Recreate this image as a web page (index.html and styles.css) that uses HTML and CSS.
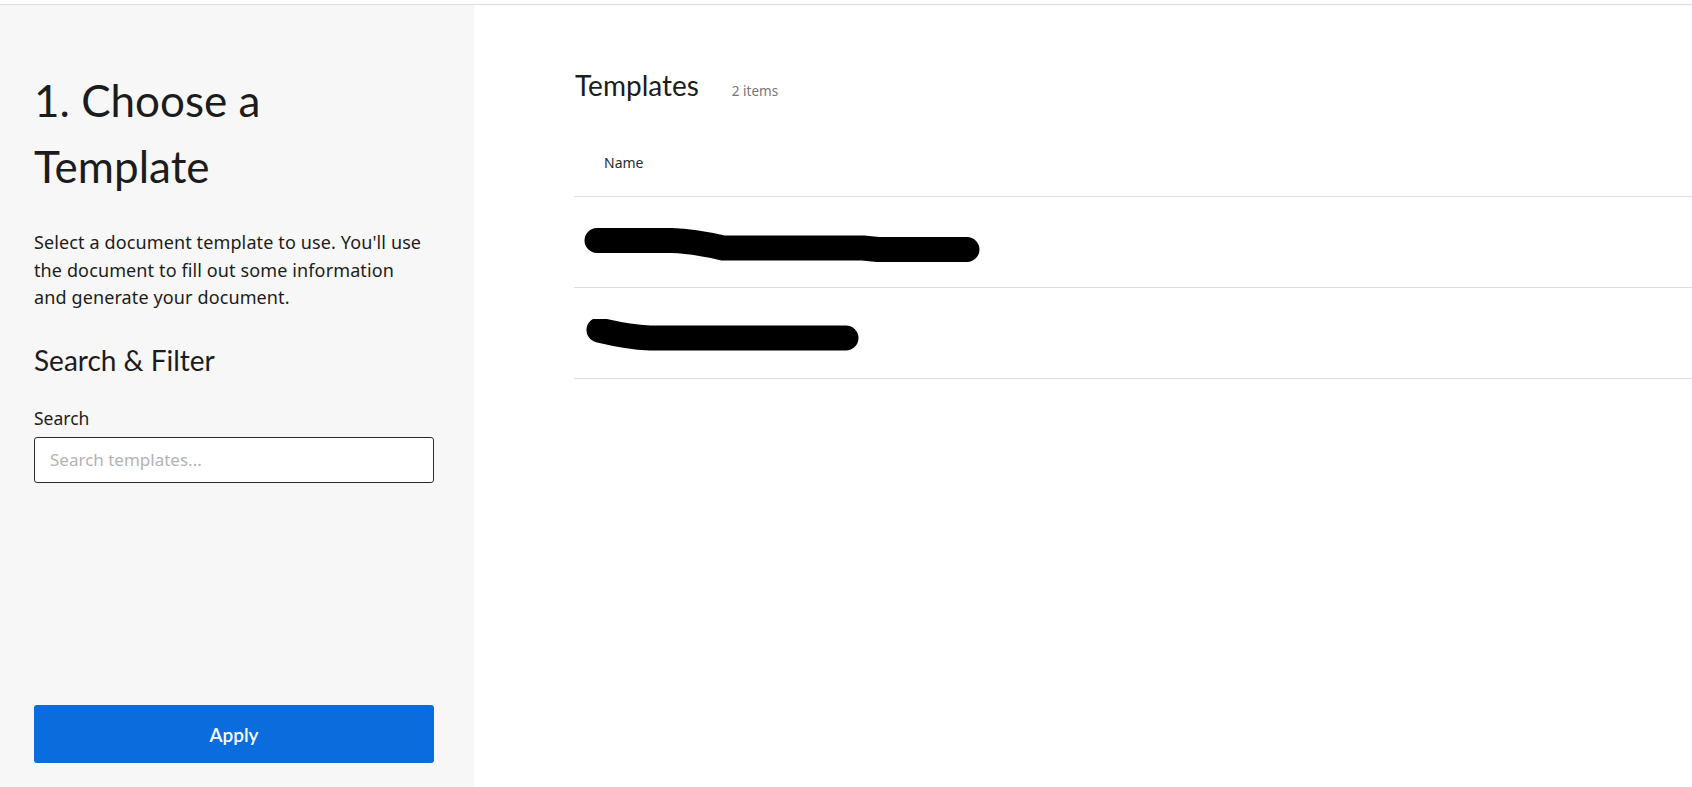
FILE: index.html
```html
<!DOCTYPE html>
<html lang="en">
<head>
<meta charset="utf-8">
<title>Choose a Template</title>
<link rel="stylesheet" href="styles.css">
</head>
<body>
<div class="topbar"></div>
<div class="layout">
  <aside class="sidebar">
    <h1 class="title">1. Choose a Template</h1>
    <p class="intro">Select a document template to use. You'll use the document to fill out some information<br>and generate your document.</p>
    <h2 class="subtitle">Search &amp; Filter</h2>
    <label class="label" for="q">Search</label>
    <input class="search" id="q" type="text" placeholder="Search templates...">
    <button class="apply" type="button">Apply</button>
  </aside>
  <main class="content">
    <div class="content-head">
      <h2 class="content-title">Templates</h2>
      <span class="count">2 items</span>
    </div>
    <div class="table">
      <div class="th">Name</div>
      <div class="row">
        <svg class="redact" width="420" height="40" viewBox="0 0 420 40">
          <path d="M24 12.5 L99 12.5 Q120 13 150 20 L290 20 L305 21.5 L394 21.5" fill="none" stroke="#000" stroke-width="25" stroke-linecap="round" stroke-linejoin="round"/>
        </svg>
      </div>
      <div class="row">
        <svg class="redact" width="420" height="40" viewBox="0 0 420 40">
          <path d="M26 11 Q55 18 77 19 L273 19" fill="none" stroke="#000" stroke-width="25" stroke-linecap="round" stroke-linejoin="round"/>
        </svg>
      </div>
    </div>
  </main>
</div>
</body>
</html>
```
FILE: styles.css
```css
* { box-sizing: border-box; }
html, body { margin: 0; padding: 0; }
body {
  font-family: "Noto Sans", "Liberation Sans", sans-serif;
  color: #1c1c1c;
  background: #fff;
  overflow: hidden;
}
.topbar {
  height: 5px;
  border-bottom: 1px solid #dcdcdc;
}
.layout {
  display: flex;
  height: 782px;
}
.sidebar {
  width: 474px;
  flex: none;
  background: #f7f7f7;
  padding: 0 40px 24px 34px;
  display: flex;
  flex-direction: column;
}
.title {
  margin: 62px 0 0;
  font-family: Lato, "Noto Sans", sans-serif;
  font-size: 44px;
  font-weight: 400;
  line-height: 66px;
}
.intro {
  margin: 30px 0 0;
  font-size: 18px;
  line-height: 27.5px;
  letter-spacing: 0.12px;
}
.subtitle {
  margin: 30px 0 0;
  font-family: Lato, "Noto Sans", sans-serif;
  font-size: 28px;
  font-weight: 400;
  line-height: 36px;
}
.label {
  margin-top: 29px;
  font-size: 17.5px;
  line-height: 22px;
}
.search {
  margin-top: 8px;
  height: 46px;
  width: 100%;
  border: 1px solid #2b2b2b;
  border-radius: 3px;
  background: #fff;
  padding: 0 15px;
  font-family: inherit;
  font-size: 17px;
  color: #1c1c1c;
}
.search::placeholder { color: #b3b3b3; }
.apply {
  margin-top: auto;
  height: 58px;
  width: 100%;
  border: 0;
  border-radius: 3px;
  background: #0b6cde;
  color: #fff;
  font-family: Lato, "Noto Sans", sans-serif;
  font-size: 19px;
  font-weight: 600;
}
.content {
  flex: 1;
  padding-left: 100px;
}
.content-head {
  display: flex;
  align-items: baseline;
  gap: 33px;
  margin-top: 62px;
}
.content-title {
  margin: 0;
  font-family: Lato, "Noto Sans", sans-serif;
  font-size: 28px;
  font-weight: 400;
  line-height: 36px;
  padding-left: 1px;
}
.count {
  font-size: 13.5px;
  color: #777;
}
.table {
  margin-top: 42px;
}
.th {
  height: 52px;
  padding: 8px 0 0 30px;
  font-size: 14px;
  color: #2a2a2a;
  border-bottom: 1px solid #dddddd;
}
.row {
  height: 91px;
  border-bottom: 1px solid #dddddd;
  padding: 31px 0 0 0;
}
.redact { display: block; margin-left: -1px; }
```
